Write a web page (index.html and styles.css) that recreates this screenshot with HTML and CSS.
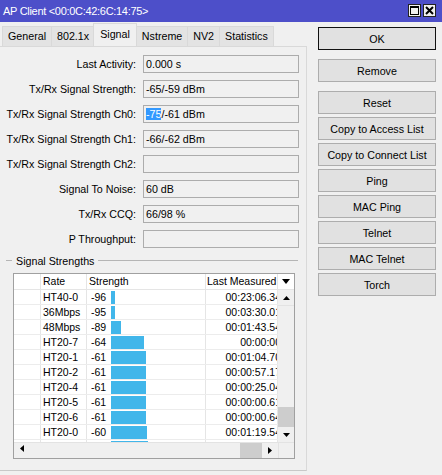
FILE: index.html
```html
<!DOCTYPE html>
<html lang="en">
<head>
  <meta charset="UTF-8" />
  <meta name="viewport" content="width=device-width, initial-scale=1.0"/>
  <title>AP Client</title>
  <link rel="stylesheet" href="styles.css">
</head>
<body>

<div class="window">
  <div class="titlebar">
    <span class="title">AP Client &lt;00:0C:42:6C:14:75&gt;</span>
    <div class="wbtns">
      <span class="wbtn">
        <svg width="9" height="9" viewBox="0 0 9 9"><rect x="0.5" y="0.5" width="8" height="8" fill="none" stroke="#000"/><line x1="0" y1="1.5" x2="9" y2="1.5" stroke="#000"/></svg>
      </span>
      <span class="wbtn">
        <svg width="9" height="9" viewBox="0 0 9 9"><path d="M1 1 L8 8 M8 1 L1 8" stroke="#000" stroke-width="2"/></svg>
      </span>
    </div>
  </div>

  <div class="main">
    <div class="left">
      <div class="tabs">
        <div class="tab">General</div>
        <div class="tab">802.1x</div>
        <div class="tab active">Signal</div>
        <div class="tab">Nstreme</div>
        <div class="tab">NV2</div>
        <div class="tab">Statistics</div>
      </div>

      <div class="panel">
        <div class="form">
          <label>Last Activity:</label><div class="field">0.000 s</div>
          <label>Tx/Rx Signal Strength:</label><div class="field">-65/-59 dBm</div>
          <label>Tx/Rx Signal Strength Ch0:</label><div class="field"><span class="sel">-75</span>/-61 dBm</div>
          <label>Tx/Rx Signal Strength Ch1:</label><div class="field">-66/-62 dBm</div>
          <label>Tx/Rx Signal Strength Ch2:</label><div class="field"></div>
          <label>Signal To Noise:</label><div class="field">60 dB</div>
          <label>Tx/Rx CCQ:</label><div class="field">66/98 %</div>
          <label>P Throughput:</label><div class="field"></div>
        </div>

        <div class="group">Signal Strengths</div>

        <div class="list">
          <div class="lhead">
            <div class="c0"></div>
            <div class="c1">Rate</div>
            <div class="c2">Strength</div>
            <div class="c3">Last Measured</div>
            <div class="csb">
              <svg width="8" height="5" viewBox="0 0 8 5"><polygon points="0,0 8,0 4,5" fill="#000"/></svg>
            </div>
          </div>

          <div class="lbody">
            <div class="rows">
              <div class="row"><div class="c0"></div><div class="c1">HT40-0</div><div class="c2"><span class="val">-96</span><span class="bar" style="width:4px"></span></div><div class="c3"><span>00:23:06.34</span></div></div>
              <div class="row"><div class="c0"></div><div class="c1">36Mbps</div><div class="c2"><span class="val">-95</span><span class="bar" style="width:4px"></span></div><div class="c3"><span>00:03:30.01</span></div></div>
              <div class="row"><div class="c0"></div><div class="c1">48Mbps</div><div class="c2"><span class="val">-89</span><span class="bar" style="width:10px"></span></div><div class="c3"><span>00:01:43.54</span></div></div>
              <div class="row"><div class="c0"></div><div class="c1">HT20-7</div><div class="c2"><span class="val">-64</span><span class="bar" style="width:33px"></span></div><div class="c3"><span>00:00:00</span></div></div>
              <div class="row"><div class="c0"></div><div class="c1">HT20-1</div><div class="c2"><span class="val">-61</span><span class="bar" style="width:35px"></span></div><div class="c3"><span>00:01:04.70</span></div></div>
              <div class="row"><div class="c0"></div><div class="c1">HT20-2</div><div class="c2"><span class="val">-61</span><span class="bar" style="width:35px"></span></div><div class="c3"><span>00:00:57.17</span></div></div>
              <div class="row"><div class="c0"></div><div class="c1">HT20-4</div><div class="c2"><span class="val">-61</span><span class="bar" style="width:35px"></span></div><div class="c3"><span>00:00:25.04</span></div></div>
              <div class="row"><div class="c0"></div><div class="c1">HT20-5</div><div class="c2"><span class="val">-61</span><span class="bar" style="width:35px"></span></div><div class="c3"><span>00:00:00.61</span></div></div>
              <div class="row"><div class="c0"></div><div class="c1">HT20-6</div><div class="c2"><span class="val">-61</span><span class="bar" style="width:35px"></span></div><div class="c3"><span>00:00:00.64</span></div></div>
              <div class="row"><div class="c0"></div><div class="c1">HT20-0</div><div class="c2"><span class="val">-60</span><span class="bar" style="width:36px"></span></div><div class="c3"><span>00:01:19.54</span></div></div>
              <div class="row"><div class="c0"></div><div class="c1">HT20-3</div><div class="c2"><span class="val">-60</span><span class="bar" style="width:37px"></span></div><div class="c3"><span>00:00:12.30</span></div></div>
            </div>
            <div class="vscroll">
              <div class="sb-btn up">
                <svg width="7" height="4" viewBox="0 0 7 4"><polygon points="3.5,0 7,4 0,4" fill="#000"/></svg>
              </div>
              <div class="sb-track"></div>
              <div class="sb-thumb"></div>
              <div class="sb-btn down">
                <svg width="7" height="4" viewBox="0 0 7 4"><polygon points="0,0 7,0 3.5,4" fill="#000"/></svg>
              </div>
            </div>
          </div>

          <div class="hscroll">
            <div class="sb-btn left">
              <svg width="4" height="7" viewBox="0 0 4 7"><polygon points="4,0 4,7 0,3.5" fill="#000"/></svg>
            </div>
            <div class="sb-track"></div>
            <div class="sb-thumb"></div>
            <div class="sb-btn right">
              <svg width="4" height="7" viewBox="0 0 4 7"><polygon points="0,0 4,3.5 0,7" fill="#000"/></svg>
            </div>
            <div class="corner"></div>
          </div>
        </div>
      </div>
    </div>

    <div class="actions">
      <button class="btn default">OK</button>
      <button class="btn spaced">Remove</button>
      <button class="btn">Reset</button>
      <button class="btn">Copy to Access List</button>
      <button class="btn">Copy to Connect List</button>
      <button class="btn">Ping</button>
      <button class="btn">MAC Ping</button>
      <button class="btn">Telnet</button>
      <button class="btn">MAC Telnet</button>
      <button class="btn">Torch</button>
    </div>
  </div>
</div>

</body>
</html>
```

FILE: styles.css
```css
body {
  margin: 0;
  font-family: "Liberation Sans", Arial, sans-serif;
  font-size: 10.7px;
  color: #000;
  background-color: #f0f0f0;
}

.window {
  width: 442px;
  height: 475px;
  overflow: hidden;
}

/* title bar */
.titlebar {
  height: 22px;
  background: #4d4fc9;
  color: white;
  display: flex;
  justify-content: space-between;
  padding: 0 6px 0 3px;
}

.title {
  line-height: 22px;
  font-size: 11px;
  letter-spacing: -0.3px;
}

.wbtns {
  display: flex;
  gap: 2px;
  margin-top: 4px;
}

.wbtn {
  width: 13px;
  height: 13px;
  box-sizing: border-box;
  border: 1px solid #222;
  background: #f0f0f0;
  display: flex;
  align-items: center;
  justify-content: center;
}

.main {
  display: flex;
  height: 453px;
}

/* tabs + page */
.left {
  width: 307px;
  display: flex;
  flex-direction: column;
  padding-bottom: 4px;
}

.tabs {
  height: 24px;
  display: flex;
  align-items: flex-end;
  padding-left: 2px;
}

.tab {
  height: 19px;
  line-height: 19px;
  padding: 0 5px;
  background: #e3e3e3;
  border: 1px solid #d9d9d9;
  border-bottom: none;
  margin-right: -1px;
}

.tab.active {
  height: 23px;
  line-height: 20px;
  margin: 0 -1px -1px -1px;
  padding: 0 6px;
  background: #f0f0f0;
}

.panel {
  flex: 1;
  border-top: 1px solid #d9d9d9;
  border-right: 1px solid #d9d9d9;
  border-bottom: 1px solid #c8c8c8;
}

.form {
  display: grid;
  grid-template-columns: 136px 156px;
  column-gap: 7px;
  row-gap: 7px;
  padding-top: 8px;
}

.form label {
  text-align: right;
  line-height: 18px;
  white-space: nowrap;
}

.field {
  height: 18px;
  box-sizing: border-box;
  border: 1px solid #acacac;
  background: #f0f0f0;
  padding: 0 2px;
  line-height: 16px;
  white-space: nowrap;
}

.sel {
  background: #3399ff;
  color: white;
}

.group {
  display: flex;
  align-items: center;
  gap: 4px;
  width: 292px;
  height: 13px;
  margin: 6px 0 0 6px;
}

.group::before,
.group::after {
  content: "";
  height: 1px;
  background: #b5b5b5;
}

.group::before {
  width: 6px;
}

.group::after {
  flex: 1;
}

/* signal list */
.list {
  width: 282px;
  height: 186px;
  box-sizing: border-box;
  margin: 6px 0 0 13px;
  border: 1px solid #a0a0a0;
  background: white;
  display: flex;
  flex-direction: column;
  font-size: 10.5px;
}

.lhead {
  display: flex;
  height: 16px;
  box-sizing: border-box;
  border-bottom: 1px solid #e5e5e5;
  line-height: 15px;
}

.c0, .c1, .c2, .c3 {
  box-sizing: border-box;
  border-right: 1px solid #e5e5e5;
  white-space: nowrap;
  overflow: hidden;
}

.c0 { width: 27px; }
.c1 { width: 46px; padding-left: 2px; }
.c2 { width: 119px; padding-left: 2px; }
.c3 { width: 72px; padding-left: 2px; }

.lhead .c3 {
  padding-left: 1px;
}

.csb {
  width: 16px;
  display: flex;
  justify-content: center;
  align-items: center;
}

.lbody {
  display: flex;
  height: 152px;
}

.rows {
  width: 264px;
  overflow: hidden;
}

.row {
  display: flex;
  height: 15px;
  box-sizing: border-box;
  border-bottom: 1px solid #ececec;
  line-height: 14px;
}

.row .c2 {
  display: flex;
  align-items: center;
  padding-left: 4px;
}

.val {
  width: 20px;
}

.bar {
  height: 13px;
  background: #41b6ea;
}

.row .c3 {
  text-align: right;
  padding: 0;
}

.row .c3 span {
  margin-right: -4px;
}

/* scroll bars */
.vscroll {
  width: 16px;
  display: flex;
  flex-direction: column;
  background: #f0f0f0;
}

.sb-btn {
  display: flex;
  align-items: center;
  justify-content: center;
  background: #f0f0f0;
}

.vscroll .up { height: 16px; border-bottom: 1px solid #e3e3e3; box-sizing: border-box; }
.vscroll .sb-track { flex: 1; }
.vscroll .sb-thumb { height: 20px; background: #cdcdcd; }
.vscroll .down { height: 15px; }

.hscroll {
  display: flex;
  height: 16px;
  box-sizing: border-box;
  border-top: 1px solid #e3e3e3;
  background: #f0f0f0;
}

.hscroll .sb-btn { width: 16px; }
.hscroll .sb-track { flex: 1; }
.hscroll .sb-thumb { width: 22px; background: #cdcdcd; }

.corner {
  width: 16px;
  box-sizing: border-box;
  border-left: 1px solid #e3e3e3;
}

/* buttons */
.actions {
  width: 118px;
  margin-left: 11px;
  padding-top: 5px;
  display: flex;
  flex-direction: column;
  gap: 3px;
}

.btn {
  height: 23px;
  padding: 0;
  border: 1px solid #adadad;
  background: #e1e1e1;
  font-family: inherit;
  font-size: 10.7px;
  color: #000;
}

.btn.default {
  border-color: #111;
  margin-bottom: 6px;
}

.btn.spaced {
  margin-bottom: 6px;
}
```
